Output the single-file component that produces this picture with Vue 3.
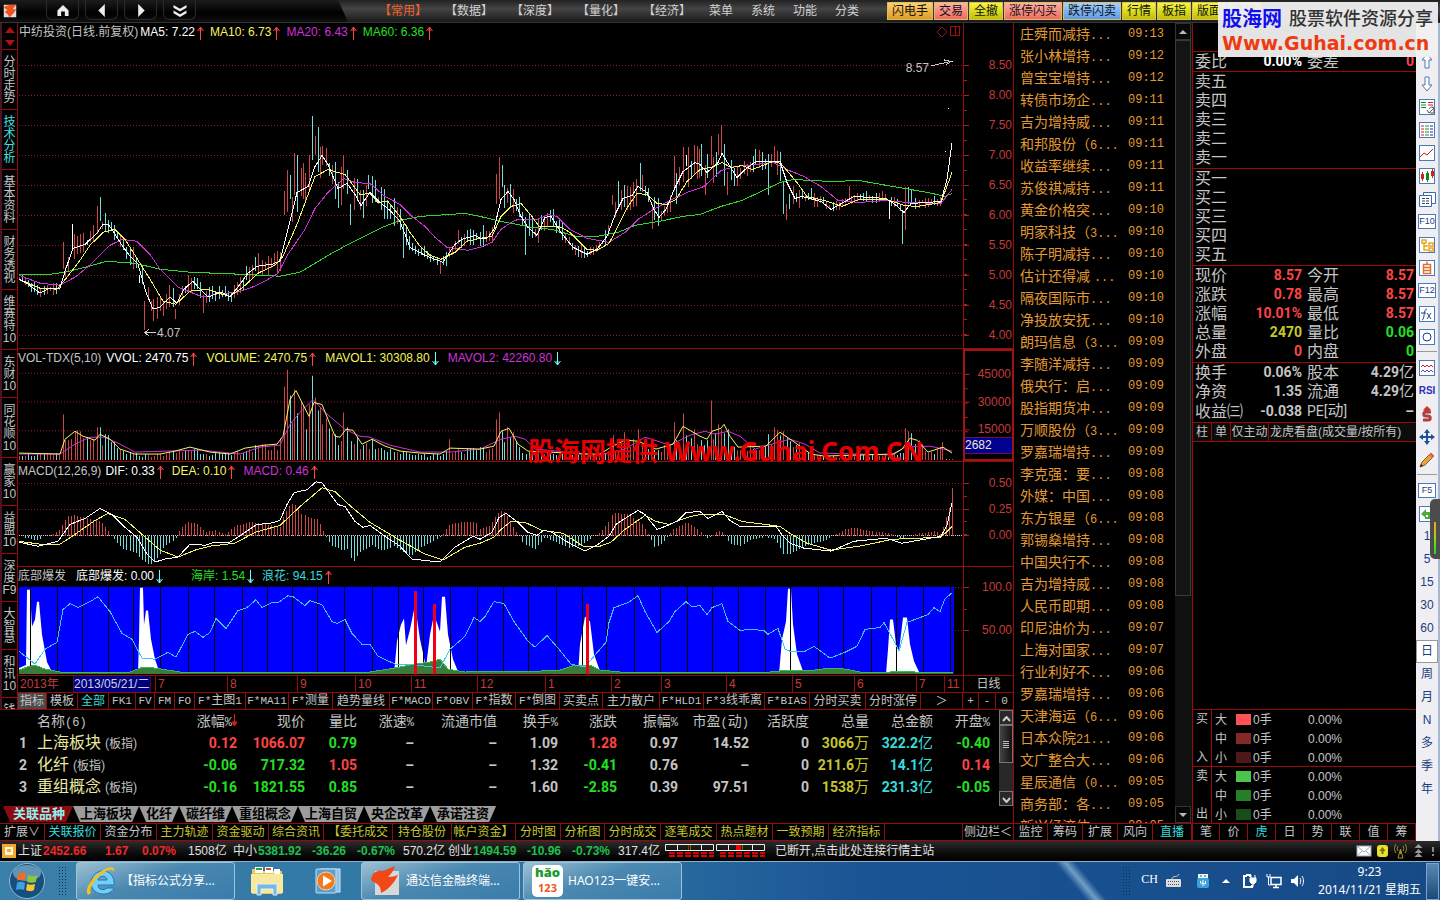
<script setup>
import { h } from 'vue'

/* Splits a label into CJK runs and half-width Latin runs. */
const Mix = (props) =>
  h('span', { class: 'mix' }, props.t.split(/([\x21-\x7e]+)/).filter(Boolean).map((s) =>
    /^[\x21-\x7e]/.test(s) ? h('span', { class: 'lat' }, s) : s))
Mix.props = ['t']

const menusA = ['【常用】', '【数据】', '【深度】', '【量化】', '【经济】']
const menusB = ['菜单', '系统', '功能', '分类']
const quick = [
  ['闪电手', 'orange'], ['交易', 'pink'], ['全撤', 'yellow'], ['涨停闪买', 'pink'], ['跌停闪卖', 'blue'],
  ['行情', 'yellow'], ['板指', 'yellow'], ['版面', 'yellow'], ['资讯', 'yellow'],
]
const sideTabs = [
  ['分', '时', '走', '势'], ['技', '术', '分', '析'], ['基', '本', '资', '料'], ['财', '务', '透', '视'],
  ['维', '赛', '特', '10'], ['东', '财', '10'], ['同', '花', '顺', '10'], ['赢', '家', '10'], ['益', '盟', '10'],
  ['深', '度', 'F9'], ['大', '智', '慧'], ['和', '讯', '10'], ['钱'],
]

const parse = (s) => s.trim().split(/\s+/).map((p) => p.split(',').map(Number))
const at = (pts, x) => {
  for (let i = 1; i < pts.length; i++) {
    if (x <= pts[i][0]) {
      const [x0, y0] = pts[i - 1]
      const [x1, y1] = pts[i]
      return y0 + ((y1 - y0) * (x - x0)) / (x1 - x0 || 1)
    }
  }
  return pts[pts.length - 1][1]
}
const noise = (i, s) => {
  const v = Math.sin(i * 12.9898 + s * 78.233) * 43758.5453
  return v - Math.floor(v)
}
const stick = (x, a, b) => `M${Math.floor(x) + 0.5} ${Math.round(a)}V${Math.round(b)}`

const ma5 = '19,280 27,284 40,294 50,289 60,289 65,272 73,249 85,245 97,234 103,225 108,225 112,230 122,246 130,257 138,265 146,293 153,310 160,308 170,298 177,304 184,290 193,282 200,290 208,298 215,295 222,293 230,298 240,285 248,274 257,267 272,265 280,262 288,230 297,193 308,187 315,167 322,156 328,165 338,189 347,184 355,195 361,206 370,193 380,203 390,211 400,222 410,248 425,256 435,260 443,263 455,245 462,240 475,236 480,239 487,239 494,230 501,200 508,192 514,200 521,217 528,228 537,236 545,218 551,217 561,233 573,248 587,255 597,250 607,237 616,213 623,199 632,196 638,187 647,193 654,210 659,218 666,210 675,188 683,172 695,163 700,165 707,173 718,163 722,154 730,167 737,178 745,170 756,162 780,162 787,183 795,199 802,197 821,202 831,210 845,202 854,197 886,199 895,205 904,213 911,204 941,202 947,180 952,143'
const ma10 = '19,280 40,289 57,290 67,278 80,261 90,246 103,233 115,230 125,240 140,264 150,280 163,302 176,305 190,292 207,290 222,295 230,297 243,288 258,274 275,266 283,257 297,225 307,198 315,177 328,170 345,175 360,195 370,194 378,203 388,202 400,217 410,233 420,247 430,256 441,260 455,253 467,242 480,239 492,237 501,217 511,207 521,204 532,217 539,227 559,227 570,233 587,250 597,251 609,244 618,227 628,207 637,194 647,195 657,204 666,205 676,200 687,182 700,170 714,167 722,163 731,168 742,166 752,170 773,162 781,164 797,183 807,197 824,201 842,207 859,200 886,200 904,206 917,207 941,203 952,173'
const ma20 = '19,276 40,284 60,286 75,278 92,264 110,246 122,240 137,242 150,255 160,270 178,288 203,298 215,295 237,293 250,289 265,282 278,274 288,255 305,230 315,209 328,193 344,179 355,183 370,184 385,197 400,205 412,217 425,227 435,238 447,248 468,251 480,248 492,243 501,230 511,223 518,220 537,220 549,215 557,217 570,230 587,239 609,243 625,233 638,220 652,211 666,203 687,193 704,187 721,171 735,167 773,163 787,170 804,177 821,187 838,201 859,203 886,201 907,203 941,204 952,190'
const ma60 = '19,275 50,275 65,273 85,268 107,262 135,264 160,270 190,273 240,275 280,277 300,273 330,255 350,244 380,229 400,221 420,217 465,214 480,217 501,222 532,228 552,230 576,237 597,237 618,233 635,226 659,222 683,217 700,215 721,207 742,201 759,193 780,183 793,180 814,181 831,182 859,181 893,187 928,193 945,197 952,194'
const range = parse('19,7 60,8 75,14 100,12 120,12 150,14 180,12 230,8 240,12 280,14 290,25 320,22 350,22 400,16 430,8 450,12 490,14 500,20 530,16 580,8 600,6 610,14 640,20 650,16 670,22 720,22 740,12 790,14 830,7 900,7 942,7')
const ma5pts = parse(ma5)
const spikes = [
  [63, 243, 270, 'r'], [72, 225, 250, 'w'], [97, 207, 235, 'r'], [100, 198, 222, 'c'], [139, 276, 284, 'w'], [144, 302, 331, 'r'],
  [153, 300, 322, 'r'], [175, 310, 320, 'r'], [203, 296, 314, 'r'], [284, 192, 216, 'r'], [287, 170, 213, 'r'], [290, 175, 200, 'c'],
  [294, 153, 196, 'r'], [297, 155, 213, 'c'], [303, 163, 200, 'r'], [309, 155, 190, 'r'], [312, 116, 160, 'c'], [315, 136, 155, 'r'],
  [318, 127, 172, 'c'], [322, 146, 165, 'r'], [343, 155, 190, 'r'], [347, 170, 195, 'c'], [350, 205, 226, 'c'], [368, 175, 190, 'c'],
  [403, 225, 259, 'c'], [440, 262, 275, 'r'], [496, 174, 205, 'r'], [499, 157, 200, 'r'], [502, 165, 188, 'c'], [525, 218, 256, 'c'],
  [612, 196, 206, 'r'], [618, 181, 208, 'c'], [640, 163, 192, 'c'], [652, 205, 230, 'r'], [674, 156, 192, 'r'], [683, 147, 182, 'r'],
  [686, 155, 166, 'w'], [699, 149, 178, 'r'], [705, 165, 196, 'r'], [711, 136, 165, 'r'], [718, 134, 155, 'r'], [721, 125, 155, 'r'],
  [724, 144, 186, 'c'], [727, 172, 196, 'r'], [755, 149, 165, 'c'], [768, 154, 196, 'c'], [774, 146, 164, 'r'], [777, 151, 175, 'r'],
  [780, 152, 181, 'c'], [783, 182, 215, 'c'], [786, 205, 221, 'r'], [789, 195, 210, 'c'], [849, 186, 200, 'r'], [889, 201, 220, 'w'],
  [902, 212, 245, 'c'], [905, 188, 231, 'r'], [908, 188, 205, 'c'], [911, 191, 204, 'c'],
]
const volSpikes = [
  [63, 415, 'r'], [75, 432, 'r'], [97, 428, 'r'], [100, 428, 'c'], [284, 387, 'r'], [287, 370, 'r'], [290, 396, 'c'], [294, 390, 'r'],
  [297, 414, 'c'], [303, 405, 'r'], [306, 430, 'c'], [309, 405, 'r'], [312, 376, 'c'], [315, 398, 'r'], [318, 411, 'c'], [322, 425, 'r'],
  [343, 413, 'r'], [347, 428, 'c'], [449, 440, 'r'], [496, 420, 'r'], [499, 413, 'r'], [502, 432, 'c'], [613, 436, 'r'], [624, 433, 'r'],
  [638, 430, 'r'], [674, 423, 'r'], [683, 414, 'r'], [686, 436, 'c'], [711, 401, 'r'], [715, 434, 'c'], [718, 425, 'r'], [721, 430, 'r'],
  [724, 434, 'c'], [768, 435, 'c'], [774, 428, 'r'], [777, 431, 'r'], [780, 436, 'c'], [905, 429, 'r'], [908, 432, 'r'], [911, 434, 'c'],
  [942, 443, 'r'],
]
const vol1 = '19,454 60,455 65,440 75,432 83,437 95,441 100,435 110,440 120,450 135,455 160,455 175,452 190,448 210,453 230,455 245,449 265,446 277,445 283,437 290,400 296,391 303,405 309,417 314,403 322,405 328,420 335,437 340,438 346,430 353,431 362,445 372,440 385,447 400,452 420,454 440,455 450,449 480,450 494,447 501,432 509,429 518,445 528,452 549,453 583,455 600,455 611,448 625,441 638,442 656,450 673,445 683,427 700,437 707,440 712,432 721,429 724,425 730,437 738,448 766,447 780,433 793,442 811,455 824,457 893,455 902,450 910,439 917,441 928,453 943,448 952,454'
const vol2 = '19,455 60,455 75,445 90,438 105,438 120,445 135,453 200,451 240,455 260,448 280,446 290,425 300,413 313,400 325,413 345,430 360,437 370,438 390,446 420,453 450,453 480,450 501,440 515,437 525,440 535,450 600,456 625,450 645,438 670,446 690,436 705,432 715,435 728,432 740,437 755,450 775,444 790,440 805,445 820,454 893,456 905,448 930,447 952,452'
const dif = '19,543 38,547 58,542 70,525 85,519 100,509 112,515 125,528 137,538 147,555 155,563 165,560 178,558 190,545 205,546 215,543 230,543 245,533 257,525 270,524 280,521 287,505 294,493 307,490 316,482 322,483 330,494 338,505 345,507 355,522 363,528 370,526 385,537 400,547 412,560 440,563 455,548 473,537 480,540 492,533 499,518 506,514 518,523 528,533 537,536 544,531 552,533 566,542 585,552 597,546 609,537 616,525 628,517 638,511 645,515 657,530 668,526 678,521 686,513 700,512 708,519 722,512 730,521 740,527 776,527 783,537 790,544 804,549 831,552 854,542 886,539 902,544 941,537 947,526 952,503'
const dea = '19,542 40,545 60,545 75,535 95,521 108,514 125,520 142,535 160,551 178,558 195,551 210,547 235,544 255,533 280,526 300,507 322,488 335,492 350,506 370,523 400,541 425,555 443,561 465,548 480,544 494,538 501,530 511,522 525,523 542,531 563,534 583,547 600,547 611,543 625,530 645,516 656,522 669,525 687,518 700,515 724,515 742,522 780,527 790,534 807,544 831,551 859,547 893,540 941,538 952,527'
const hist = parse('19,537 30,540 38,541 45,537 55,534 60,530 67,517 75,516 85,519 100,522 107,530 111,537 115,541 122,550 135,553 143,562 150,566 158,558 165,546 175,541 180,530 187,523 197,525 205,533 215,531 225,535 235,527 250,523 265,525 280,528 284,515 288,506 294,503 300,513 310,519 318,520 325,537 332,547 342,551 347,550 353,563 360,553 372,546 382,552 395,547 405,555 412,556 420,549 435,541 442,537 448,526 460,523 475,523 480,530 490,527 499,511 503,510 510,522 517,535 523,544 535,550 545,538 555,543 570,549 583,545 592,538 600,533 607,525 614,513 625,514 635,520 642,525 648,535 655,550 665,541 673,530 680,527 687,523 695,529 701,533 708,540 716,533 721,531 730,545 740,547 750,541 765,538 775,540 783,555 790,555 805,547 825,541 835,536 845,530 855,529 870,532 890,534 900,540 915,535 935,532 941,535 945,521 949,508 952,488')

const candles = { r: '', c: '', w: '' }
const vols = { r: '', c: '' }
const macd = { r: '', c: '' }
const vol1pts = parse(vol1)
for (let i = 0; i < 305; i++) {
  const x = 19 + Math.round(i * 3.07)
  const y = at(ma5pts, x)
  const a = at(range, x)
  const rising = at(ma5pts, x + 4) < at(ma5pts, x - 4)
  const color = noise(i, 3) < (rising ? 0.78 : 0.3) ? 'r' : 'c'
  if (x < 942 && !spikes.some((s) => Math.abs(s[0] - x) < 2)) {
    candles[color] += stick(x, y - a * (0.15 + 0.85 * noise(i, 1)), y + a * (0.15 + 0.75 * noise(i, 2)))
  }
  if (!volSpikes.some((s) => Math.abs(s[0] - x) < 2)) {
    const top = 461 - (461 - at(vol1pts, x)) * (0.5 + 0.65 * noise(i, 5))
    vols[color] += stick(x, x > 943 ? 460 : top, 461)
  }
  const m = at(hist, x)
  if (Math.abs(m - 537) > 1) macd[m < 537 ? 'r' : 'c'] += stick(x, m, 537)
}
spikes.forEach(([x, a, b, k]) => { candles[k] += stick(x, a, b) })
volSpikes.forEach(([x, a, k]) => { vols[k] += stick(x, a, 461) })

const wave = '19,652 35,665 45,650 57,643 63,610 70,604 78,608 90,602 98,597 110,612 122,634 132,640 142,659 155,660 168,653 176,658 188,635 195,632 203,638 210,633 216,619 226,629 238,611 247,608 256,600 262,608 272,603 278,603 288,596 293,597 305,606 310,601 322,605 332,622 337,624 345,620 352,634 362,645 370,645 378,657 395,665 410,665 440,669 450,650 465,637 474,618 480,622 485,617 494,602 504,604 514,622 528,642 535,648 547,636 559,650 571,665 585,668 594,657 606,643 609,623 614,608 628,603 638,596 645,612 657,633 669,622 675,612 686,602 692,607 700,606 707,615 712,608 722,604 728,622 740,631 750,630 764,631 768,635 778,629 785,650 790,652 805,652 814,647 830,659 845,653 857,647 865,630 880,628 884,623 893,640 899,652 907,623 928,615 934,608 940,612 945,599 952,593'
const shore = '19,671 27,668 35,666 45,670 60,673 130,673 143,668 155,669 180,673 370,673 395,669 415,665 430,663 440,660 448,670 465,673 540,672 560,671 575,666 590,666 600,671 620,673 770,673 790,671 815,671 831,669 845,670 860,673 890,673 903,672 915,673 953,673'
const peaks = [
  '19,675 19,669 26,666 27,590 30,590 32,627 35,620 37,602 39,602 42,635 47,663 53,675',
  '138,675 139,640 140,588 143,588 144,625 146,611 148,611 151,640 155,660 160,675',
  '394,675 397,642 401,625 404,619 406,646 410,630 415,605 420,640 426,668 430,635 434,615 440,632 442,597 445,597 448,635 453,660 459,675',
  '578,675 580,645 585,617 590,622 594,655 601,675',
  '779,675 782,640 786,622 788,589 791,589 793,625 797,655 804,675',
  '886,675 888,650 890,620 893,620 896,645 899,652 903,618 907,618 910,645 914,662 920,675',
]
const bars = [31, 58, 83, 109, 134, 161, 189, 215, 243, 268, 293, 318, 345, 373, 399, 424, 451, 478, 504, 529, 557, 583, 607, 635, 661, 688, 713, 739, 766, 791, 819, 844, 872, 897, 924, 951]

const minor = (from, to, step) => {
  let d = ''
  for (let y = from; y <= to; y += step) d += `M0 ${Math.round(y) + 0.5}H3`
  return d
}
const panels = [
  { id: 'price', y: 23, h: 326, grid: [65, 95, 125, 155, 185, 216, 246, 276, 306, 336], labels: ['8.50', '8.00', '7.50', '7.00', '6.50', '6.00', '5.50', '5.00', '4.50', '4.00'], minor: minor(65, 340, 15) },
  { id: 'vol', y: 349, h: 113, grid: [373, 402, 431], labels: ['45000', '30000', '15000'], minor: minor(373, 440, 15) },
  { id: 'macd', y: 462, h: 105, grid: [483, 509, 536], labels: ['0.50', '0.25', '0.00'], minor: minor(483, 540, 13) },
  { id: 'wave', y: 567, h: 109, grid: [587, 631], labels: ['100.0', '50.00'], minor: minor(587, 632, 22) },
]
const legends = {
  price: [['中纺投资(日线.前复权)', 'g', ''], ['MA5: 7.22', 'w', 'u'], ['MA10: 6.73', 'y', 'u'], ['MA20: 6.43', 'm', 'u'], ['MA60: 6.36', 'n', 'u']],
  vol: [['VOL-TDX(5,10)', 'g', ''], ['VVOL: 2470.75', 'w', 'u'], ['VOLUME: 2470.75', 'y', 'u'], ['MAVOL1: 30308.80', 'y', 'd'], ['MAVOL2: 42260.80', 'm', 'd']],
  macd: [['MACD(12,26,9)', 'g', ''], ['DIF: 0.33', 'w', 'u'], ['DEA: 0.10', 'y', 'u'], ['MACD: 0.46', 'm', 'u']],
  wave: [['底部爆发', 'g', ''], ['底部爆发: 0.00', 'w', 'd'], ['海岸: 1.54', 'n', 'd'], ['浪花: 94.15', 'c', 'u']],
}
const months = [[155, '7'], [227, '8'], [297, '9'], [355, '10'], [411, '11'], [477, '12'], [545, '1'], [611, '2'], [661, '3'], [726, '4'], [792, '5'], [854, '6'], [916, '7'], [944, '11']]
const pct = (v, from, size) => ((v - from) / size) * 100 + '%'

const formulaTabs = ['指标', '模板', '全部', 'FK1', 'FV', 'FM', 'FO', 'F*主图1', 'F*MA11', 'F*测量', '趋势量线', 'F*MACD', 'F*OBV', 'F*指数', 'F*倒图', '买卖点', '主力散户', 'F*HLD1', 'F*3线乖离', 'F*BIAS', '分时买卖', '分时涨停', '＞', '+', '-', '0']
const heads = ['', '名称(6)', '涨幅%', '现价', '量比', '涨速%', '流通市值', '换手%', '涨跌', '振幅%', '市盈(动)', '活跃度', '总量', '总金额', '开盘%']
const rows = [
  ['上海板块', [['0.12', 'r'], ['1066.07', 'r'], ['0.79', 'n'], ['–', 'g'], ['–', 'g'], ['1.09', 'g'], ['1.28', 'r'], ['0.97', 'g'], ['14.52', 'g'], ['0', 'g'], ['3066', 'o', '万'], ['322.2', 'b', '亿'], ['-0.40', 'n']]],
  ['化纤', [['-0.06', 'n'], ['717.32', 'n'], ['1.05', 'r'], ['–', 'g'], ['–', 'g'], ['1.32', 'g'], ['-0.41', 'n'], ['0.76', 'g'], ['–', 'g'], ['0', 'g'], ['211.6', 'o', '万'], ['14.1', 'b', '亿'], ['0.14', 'r']]],
  ['重组概念', [['-0.16', 'n'], ['1821.55', 'n'], ['0.85', 'n'], ['–', 'g'], ['–', 'g'], ['1.60', 'g'], ['-2.85', 'n'], ['0.39', 'g'], ['97.51', 'g'], ['0', 'g'], ['1538', 'o', '万'], ['231.3', 'b', '亿'], ['-0.05', 'n']]],
]
const sectors = ['关联品种', '上海板块', '化纤', '碳纤维', '重组概念', '上海自贸', '央企改革', '承诺注资']
const footTabs = [['扩展∨', 'g'], ['关联报价', 'c'], ['资金分布', 'g'], ['主力轨迹', 'o'], ['资金驱动', 'o'], ['综合资讯', 'o'], ['【委托成交', 'o'], ['持仓股份', 'o'], ['帐户资金】', 'o'], ['分时图', 'o'], ['分析图', 'o'], ['分时成交', 'o'], ['逐笔成交', 'o'], ['热点题材', 'o'], ['一致预期', 'o'], ['经济指标', 'o'], ['', 'g'], ['侧边栏＜', 'g']]
const newsTabs = ['监控', '筹码', '扩展', '风向', '直播']
const quoteTabs = ['笔', '价', '虎', '日', '势', '联', '值', '筹']
const news = [
  ['庄舜而减持...', '13'], ['张小林增持...', '12'], ['曾宝宝增持...', '12'], ['转债市场企...', '11'], ['吉为增持威...', '11'], ['和邦股份（6...', '11'], ['收益率继续...', '11'], ['苏俊祺减持...', '11'],
  ['黄金价格突...', '10'], ['明家科技（3...', '10'], ['陈子明减持...', '10'], ['估计还得减 ...', '10'], ['隔夜国际市...', '10'], ['净投放安抚...', '10'], ['朗玛信息（3...', '09'], ['李随洋减持...', '09'],
  ['俄央行：启...', '09'], ['股指期货冲...', '09'], ['万顺股份（3...', '09'], ['罗嘉瑞增持...', '09'], ['李克强：要...', '08'], ['外媒：中国...', '08'], ['东方银星（6...', '08'], ['郭锡燊增持...', '08'],
  ['中国央行不...', '08'], ['吉为增持威...', '08'], ['人民币即期...', '08'], ['印尼油价为...', '07'], ['上海对国家...', '07'], ['行业利好不...', '06'], ['罗嘉瑞增持...', '06'], ['天津海运（6...', '06'],
  ['日本众院21...', '06'], ['文广整合大...', '06'], ['星辰通信（0...', '05'], ['商务部：各...', '05'], ['新兴经济体...', '05'],
]
const quoteA = [
  ['现价', '8.57', 'r', '今开', '8.57', 'r'], ['涨跌', '0.78', 'r', '最高', '8.57', 'r'], ['涨幅', '10.01%', 'r', '最低', '8.57', 'r'],
  ['总量', '2470', 'o', '量比', '0.06', 'n'], ['外盘', '0', 'r', '内盘', '0', 'n'],
]
const quoteB = [['换手', '0.06%', 'g', '股本', '4.29', 'g', '亿'], ['净资', '1.35', 'g', '流通', '4.29', 'g', '亿'], ['收益㈢', '-0.038', 'g', 'PE[动]', '–', 'g', '']]
const flows = [
  { side: ['买', '入'], items: [['大', 'r1'], ['中', 'r2'], ['小', 'r3']] },
  { side: ['卖', '出'], items: [['大', 'g1'], ['中', 'g2'], ['小', 'g3']] },
]
const tools = ['up', 'down', 'report', 'list', 'line', 'kline', 'pages', 'F10', 'tree', 'self', 'F12', 'fx', 'circle', '-', 'waves', 'RSI', 'dollar', 'move', 'pencil', '-', 'F5', 'back', '1', '5', '15', '30', '60', '日', '周', '月', 'N', '多', '季', '年']
const plain = (t) => /^(\d+|RSI|[日周月N多季年])$/.test(t)
const indices = [
  ['上证', '2452.66', '1.67', '0.07%', '1508亿', 'up'],
  ['中小', '5381.92', '-36.26', '-0.67%', '570.2亿', 'dn'],
  ['创业', '1494.59', '-10.96', '-0.73%', '317.4亿', 'dn'],
]
</script>

<template>
  <div class="screen">
    <header class="top">
      <svg class="logo" viewBox="0 0 18 18"><rect x="2" y="2" width="14" height="14" fill="#ddd" /><path d="M2 5c4-3 8-3 14-3l-4 5h4c-3 5-5 7-8 9-1-3-2-4-5-6l3-2z" fill="#f2501c" /></svg>
      <nav class="nav">
        <button aria-label="主页"><svg viewBox="0 0 14 14"><path d="M7 1L1 7v6h4V8h4v5h4V7z" /></svg></button>
        <button aria-label="后退"><svg viewBox="0 0 14 14"><path d="M10 0v14L3 7z" /></svg></button>
        <button aria-label="前进"><svg viewBox="0 0 14 14"><path d="M4 0v14l7-7z" /></svg></button>
        <button aria-label="更多"><svg viewBox="0 0 14 14"><path d="M0 1l7 4 7-4v3L7 8 0 4zM0 7l7 4 7-4v3l-7 4-7-4z" /></svg></button>
      </nav>
      <nav class="menus">
        <a v-for="(m, i) in menusA" :key="m" href="#" class="wide" :class="{ on: i === 0 }">{{ m }}</a>
        <a v-for="m in menusB" :key="m" href="#">{{ m }}</a>
      </nav>
      <div class="quick">
        <button v-for="q in quick" :key="q[0]" :class="q[1]">{{ q[0] }}</button>
      </div>
      <div class="brand">
        <div class="brand-row"><b>股海网</b><span>股票软件资源分享</span></div>
        <div class="brand-url">Www.Guhai.com.cn</div>
      </div>
    </header>

    <main class="main">
      <section class="left">
        <div class="upper">
          <div class="side">
            <div class="side-arrows">
              <button aria-label="上一只"><svg viewBox="0 0 10 6"><path d="M5 0l5 6H0z" /></svg></button>
              <button aria-label="下一只"><svg viewBox="0 0 10 6"><path d="M5 6l5-6H0z" /></svg></button>
            </div>
            <button v-for="(t, i) in sideTabs" :key="i" class="side-tab" :class="{ on: i === 1 }">
              <span v-for="(c, j) in t" :key="j">{{ c }}</span>
            </button>
          </div>

          <div class="charts">
            <section v-for="p in panels" :key="p.id" class="panel" :class="p.id">
              <div class="plot">
                <svg class="canvas" :viewBox="`18 ${p.y} 945 ${p.h}`" preserveAspectRatio="none">
                  <path v-for="g in p.grid" :key="g" class="grid" :d="`M19 ${g + 0.5}H963`" />
                  <template v-if="p.id === 'price'">
                    <path class="red" :d="candles.r" /><path class="cyan" :d="candles.c" /><path class="white" :d="candles.w" />
                    <polyline class="green" :points="ma60" /><polyline class="magenta" :points="ma20" /><polyline class="yellow" :points="ma10" /><polyline class="white" :points="ma5" />
                    <path class="white" d="M945 151.5h1M948 108.5h1M952 61.5h1" />
                    <path class="gray" d="M931 66L951 61.500M944 60L951 61.500L946 65M144.500 333.500H156M149 330L145 333.500L149 337" />
                    <path class="mark" d="M942 27l5 5-5 5-5-5zM950.500 26.500h9v9h-9zM955.500 26v10" />
                  </template>
                  <template v-else-if="p.id === 'vol'">
                    <path class="red" :d="vols.r" /><path class="cyan" :d="vols.c" />
                    <polyline class="magenta" :points="vol2" /><polyline class="yellow" :points="vol1" />
                  </template>
                  <template v-else-if="p.id === 'macd'">
                    <path class="zero" d="M19 536.500H963" />
                    <path class="red" :d="macd.r" /><path class="cyan" :d="macd.c" />
                    <polyline class="yellow" :points="dea" /><polyline class="white" :points="dif" />
                  </template>
                  <template v-else>
                    <rect x="19" y="587" width="935" height="88" fill="#0000fe" />
                    <polygon v-for="k in peaks" :key="k" :points="k" fill="#fff" />
                    <path v-for="b in bars" :key="b" class="black" :d="`M${b - 0.5} 587V675`" />
                    <polygon :points="`19,675 ${shore} 953,675`" fill="#3a7a3a" />
                    <polyline class="lime" :points="shore" />
                    <polyline class="aqua" :points="wave" />
                    <path d="M414 591h3v84h-3zM433 604h3v71h-3zM586 604h3v71h-3z" fill="#f00010" />
                  </template>
                </svg>
                <div class="legend">
                  <span v-for="(l, i) in legends[p.id]" :key="i" class="leg" :class="'t-' + l[1]">{{ l[0] }}<svg v-if="l[2]" :class="l[2]" viewBox="0 0 7 14"><path d="M3.500 14V1M0.500 5L3.500 1L6.500 5M2 4h3" /></svg></span>
                </div>
                <template v-if="p.id === 'price'">
                  <span class="tag hi">8.57</span>
                  <span class="tag lo">4.07</span>
                </template>
              </div>
              <div class="axis">
                <svg class="canvas" :viewBox="`0 ${p.y} 51 ${p.h}`" preserveAspectRatio="none">
                  <path class="tick" :d="p.minor" />
                  <path v-for="g in p.grid" :key="g" class="tick" :d="`M0 ${g + 0.5}H5`" />
                </svg>
                <span v-for="(g, i) in p.grid" :key="g" class="scale" :style="{ top: pct(g, p.y, p.h) }">{{ p.labels[i] }}</span>
                <span v-if="p.id === 'vol'" class="cursor">2682</span>
              </div>
            </section>
            <div class="dates">
              <div class="date-line">
                <span class="year">2013年</span>
                <span class="pick">2013/05/21/二</span>
                <span v-for="(m, i) in months" :key="i" class="month" :style="{ left: pct(m[0], 18, 945) }">{{ m[1] }}</span>
              </div>
              <div class="period">日线</div>
            </div>
            <nav class="formula">
              <button v-for="(f, i) in formulaTabs" :key="f" :class="{ sel: i === 0, on: i === 2 }"><Mix :t="f" /></button>
            </nav>
          </div>
        </div>

        <div class="board">
          <table>
            <colgroup><col v-for="(c, i) in heads" :key="i" :class="'c' + i"></colgroup>
            <thead>
              <tr><th v-for="(c, i) in heads" :key="i"><Mix :t="c" /><svg v-if="i === 2" viewBox="0 0 5 12"><path d="M2.500 0V10M0 8h5L2.500 12z" /></svg></th></tr>
            </thead>
            <tbody>
              <tr v-for="(r, i) in rows" :key="r[0]">
                <td class="t-g">{{ i + 1 }}</td>
                <td class="name">{{ r[0] }} <small>(板指)</small></td>
                <td v-for="(v, j) in r[1]" :key="j" :class="'t-' + v[1]">{{ v[0] }}<i v-if="v[2]">{{ v[2] }}</i></td>
              </tr>
            </tbody>
          </table>
          <div class="vbar">
            <button aria-label="向上"><svg viewBox="0 0 9 6"><path d="M1 5l3.500-4L8 5" /></svg></button>
            <div class="thumb"></div>
            <button aria-label="向下"><svg viewBox="0 0 9 6"><path d="M1 1l3.500 4L8 1" /></svg></button>
          </div>
        </div>
        <nav class="sectors"><button v-for="(s, i) in sectors" :key="s" :class="{ on: i === 0 }">{{ s }}</button></nav>
        <nav class="foot"><button v-for="(f, i) in footTabs" :key="i" :class="'t-' + f[1]">{{ f[0] }}</button></nav>
      </section>

      <section class="news">
        <div class="news-body">
          <ul>
            <li v-for="(n, i) in news" :key="i"><a href="#"><Mix :t="n[0]" /></a><time>09:{{ n[1] }}</time></li>
          </ul>
          <div class="news-bar">
            <button aria-label="上翻"><svg viewBox="0 0 8 4"><path d="M4 0l4 4H0z" /></svg></button>
            <div class="news-thumb"></div>
            <button aria-label="下翻"><svg viewBox="0 0 8 4"><path d="M4 4l4-4H0z" /></svg></button>
          </div>
        </div>
        <nav class="tabs news-tabs"><button v-for="t in newsTabs" :key="t" :class="{ on: t === '直播' }">{{ t }}</button></nav>
      </section>

      <section class="quote">
        <div class="q-head"></div>
        <div class="q-block one"><div class="q-row"><span>委比</span><b class="t-w">0.00%</b><span>委差</span><b class="t-r">0</b></div></div>
        <div class="q-block"><div v-for="n in '五四三二一'" :key="n" class="q-row"><span>卖{{ n }}</span></div></div>
        <div class="q-block"><div v-for="n in '一二三四五'" :key="n" class="q-row"><span>买{{ n }}</span></div></div>
        <div class="q-block"><div v-for="q in quoteA" :key="q[0]" class="q-row"><span>{{ q[0] }}</span><b :class="'t-' + q[2]">{{ q[1] }}</b><span>{{ q[3] }}</span><b :class="'t-' + q[5]">{{ q[4] }}</b></div></div>
        <div class="q-block last"><div v-for="q in quoteB" :key="q[0]" class="q-row"><span>{{ q[0] }}</span><b :class="'t-' + q[2]">{{ q[1] }}</b><span><Mix :t="q[3]" /></span><b :class="'t-' + q[5]">{{ q[4] }}<i>{{ q[6] }}</i></b></div></div>
        <nav class="watch"><button>柱</button><button>单</button><button>仅主动</button><button>龙虎看盘(成交量/按所有)</button></nav>
        <div class="q-space"></div>
        <div v-for="f in flows" :key="f.side[0]" class="flow">
          <div class="flow-side"><span>{{ f.side[0] }}</span><span>{{ f.side[1] }}</span></div>
          <div class="flow-rows">
            <div v-for="it in f.items" :key="it[0]" class="flow-row"><span>{{ it[0] }}</span><i :class="it[1]"></i><span>0手</span><span>0.00%</span></div>
          </div>
        </div>
        <nav class="tabs quote-tabs"><button v-for="t in quoteTabs" :key="t" :class="{ on: t === '虎' }">{{ t }}</button></nav>
      </section>

      <aside class="strip">
        <template v-for="(t, i) in tools" :key="i">
          <hr v-if="t === '-'">
          <button v-else :class="{ day: t === '日', rsi: t === 'RSI' }" :aria-label="t">
            <template v-if="plain(t)">{{ t }}</template>
            <span v-else-if="t[0] === 'F'" class="key">{{ t }}</span>
            <svg v-else viewBox="0 0 18 18">
              <path v-if="t === 'up'" d="M9 2l5 6h-3v8H7V8H4z" fill="#fff" stroke="#4a78b8" />
              <path v-else-if="t === 'down'" d="M9 16l5-6h-3V2H7v8H4z" fill="#fff" stroke="#4a78b8" />
              <g v-else-if="t === 'dollar'"><path d="M9 1l4 4-2 1H7L5 5z" fill="#c33" /><path d="M13 7H8c-3 0-3 4 0 4h2c3 0 3 4 0 4H5" fill="none" stroke="#b04040" stroke-width="3" /></g>
              <g v-else-if="t === 'move'" fill="#1c4f9c"><path d="M9 1l3 4H6zM9 17l3-4H6zM1 9l4-3v6zM17 9l-4-3v6z" /><path d="M8 4h2v10H8zM4 8h10v2H4z" /></g>
              <g v-else-if="t === 'pencil'"><path d="M2 16l2-5 9-9 3 3-9 9z" fill="#e8a23a" stroke="#8a5a20" /><path d="M11 4l3 3 2-2-3-3z" fill="#e86a5a" /><path d="M2 16l1-3 2 2z" fill="#222" /></g>
              <g v-else-if="t === 'pages'"><path d="M5.500 2.500h12v11h-12z" fill="#fff" stroke="#3a68a8" /><path d="M1.500 5.500h12v11h-12z" fill="#fff" stroke="#3a68a8" /><path d="M4 8.500h3M8 8.500h3M4 11h3M8 11h3M4 13.500h3M8 13.500h3" stroke="#345" /></g>
              <g v-else>
                <rect x="1.500" y="1.500" width="15" height="15" fill="#fff" stroke="#4a7ab8" />
                <path v-if="t === 'report'" d="M3 4.500h5M3 7h5M3 9.500h5" stroke="#1a8a2a" fill="none" />
                <path v-if="t === 'report'" d="M10 4.500h5M10 7h5" stroke="#c22" fill="none" /><path v-if="t === 'report'" d="M9 12l2 3 5-5-2-1M11 11c2-3 4-2 5 0v4h-4" stroke="#555" fill="none" />
                <path v-if="t === 'list'" d="M3 5h3M3 8h3M3 11h3M3 14h3" stroke="#c22" /><path v-if="t === 'list'" d="M7 5h4M7 8h4M7 11h4M7 14h4" stroke="#282" /><path v-if="t === 'list'" d="M12 5h3M12 8h3M12 11h3M12 14h3" stroke="#22a" />
                <path v-if="t === 'line'" d="M2 13l4-4 3 2 6-6" fill="none" stroke="#c22" />
                <path v-if="t === 'kline'" d="M4.500 5v9M14.500 2v9" stroke="#c22" /><path v-if="t === 'kline'" d="M4.500 7v5M14.500 4v5" stroke="#c22" stroke-width="3" /><path v-if="t === 'kline'" d="M9.500 4v11" stroke="#181" /><path v-if="t === 'kline'" d="M9.500 6v7" stroke="#181" stroke-width="3" />
                <path v-if="t === 'tree'" d="M4 4h4v3H4zM6 7v7h4M6 10h4M11 7h4v3h-4zM11 12h4v3h-4z" fill="none" stroke="#e8a820" stroke-width="1.500" />
                <path v-if="t === 'self'" d="M5.500 5.500h7v9h-7zM5 8.500h8M5 11.500h8M9 2.500v3" fill="none" stroke="#e07030" stroke-width="1.500" />
                <path v-if="t === 'fx'" d="M4 15c3 0 1-11 5-11M3 8h5M9 8l4 6M13 8l-4 6" fill="none" stroke="#1c3f9c" />
                <circle v-if="t === 'circle'" cx="9" cy="9" r="4" fill="none" stroke="#1c3f9c" />
                <path v-if="t === 'waves'" d="M3 8l2-2 2 2 2-2 2 2 2-2 2 2" fill="none" stroke="#c22" /><path v-if="t === 'waves'" d="M3 13l2-2 2 2 2-2 2 2 2-2 2 2" fill="none" stroke="#63c" />
                <path v-if="t === 'back'" d="M3 9l5-5v3h5v7H7v-2h3v-2H8v3z" fill="#4aaa3a" />
              </g>
            </svg>
          </button>
        </template>
        <div class="knob"><i></i></div>
      </aside>
    </main>

    <footer class="status">
      <svg class="st-ico" viewBox="0 0 14 14"><rect width="14" height="14" fill="#f0a830" /><rect x="3" y="3" width="8" height="8" fill="#fff6d8" /><rect x="5" y="5" width="4" height="3" fill="#e8b040" /></svg>
      <div v-for="x in indices" :key="x[0]" class="idx" :class="x[5]"><span>{{ x[0] }}</span><b>{{ x[1] }}</b><b>{{ x[2] }}</b><b>{{ x[3] }}</b><span>{{ x[4] }}</span></div>
      <svg class="gauge" viewBox="0 0 102 14">
        <path d="M0.500 0.500h48v6h-48zM12.500 1v6M36.500 1v6M51.500 0.500h48v6h-48zM63.500 1v6M87.500 1v6" fill="none" stroke="#eee" />
        <path d="M23 1h1v5h-1zM71 1h5v5h-5z" fill="#f00" /><path d="M25 1h1v5h-1zM77 1h1v5h-1z" fill="#0a0" />
        <path d="M4 9H49M4 12H49M55 9H100M55 12H100" stroke="#e00000" stroke-width="2" stroke-dasharray="6 2" />
      </svg>
      <span class="link-msg">已断开,点击此处连接行情主站</span>
      <svg class="st-right" viewBox="0 0 80 16">
        <rect x="1" y="3" width="14" height="10" fill="#fff" stroke="#9ab" /><path d="M1 3l7 6 7-6M1 13l5-5M15 13l-5-5" fill="none" stroke="#9ab" />
        <rect x="21" y="2" width="11" height="12" rx="3" fill="#e6e030" /><path d="M26.500 4l3 4h-2v3h-2V8h-2z" fill="#7a7000" />
        <path d="M44.500 6v5M42 15l2.500-9 2.500 9zM42 3c-1 2-1 3 0 5M47 3c1 2 1 3 0 5M40 1c-2 3-2 6 0 9M49 1c2 3 2 6 0 9" fill="none" stroke="#a09038" />
        <path d="M62.500 1l4 4h-8zM62.500 6l4 4h-8zM62.500 10l4 4h-8z" fill="#999" /><path d="M76 4h2v5h-2zM76 11h2v2h-2z" fill="#888" />
      </svg>
    </footer>

    <footer class="taskbar">
      <button class="orb" aria-label="开始"><svg viewBox="0 0 38 38">
        <circle cx="19" cy="19" r="17.500" fill="#174f7c" stroke="#8fb8d0" /><ellipse cx="19" cy="11" rx="14" ry="8" fill="#7fb2cc" opacity="0.7" />
        <path d="M10 12c3-2 5-1 8 0l-1 7c-3-1-5-2-8 0z" fill="#f06a28" /><path d="M20 13c3 1 5 2 9 0l-1 7c-3 1-6 1-9 0z" fill="#8cc63e" />
        <path d="M9 21c3-2 5-1 8 0l-1 7c-3-1-6-1-8 0z" fill="#3f9fe0" /><path d="M19 22c3 1 5 1 8 0l-1 6c-3 2-6 1-8 0z" fill="#fbc52c" />
      </svg></button>
      <span class="grip"></span>
      <button class="task ie"><svg viewBox="0 0 32 32"><path fill-rule="evenodd" d="M29 20c1-8-4-14-11-14S6 12 6 18s5 11 12 11c5 0 9-2 11-6h-7c-3 3-9 2-9-3zM13 15c1-5 9-5 9 0z" fill="#6fd0f8" stroke="#2077b8" /><path d="M3 30C-2 24 10 8 22 3c6-2 8 0 7 4-1-3-4-3-9 0C11 12 3 24 6 28z" fill="#f4c020" /></svg><span>【指标公式分享...</span></button>
      <button class="pin" aria-label="资源管理器"><svg viewBox="0 0 34 32"><path d="M2 4h9l2 2h19v23H2z" fill="#e8c860" /><path d="M5 2h8v6H5zM15 2h8v6h-8zM24 4h6v5h-6z" fill="#fff" /><path d="M6 3h6v2H6z" fill="#3a9a4a" /><path d="M16 3h5v2h-5z" fill="#d05030" /><path d="M1 9h32v19H1z" fill="#f8e9a0" /><path d="M7 30V19h20v11h-4v-6H11v6z" fill="#78b8e0" stroke="#d8f0ff" /></svg></button>
      <button class="pin small" aria-label="播放器"><svg viewBox="0 0 28 28"><rect x="7" y="2" width="19" height="23" fill="#8cc0e0" stroke="#cfe8f8" /><rect x="2" y="2" width="20" height="24" rx="1" fill="#5aa0d0" stroke="#bfe0f4" /><circle cx="12" cy="14" r="9" fill="#f07a1c" stroke="#ffd0a0" /><path d="M9 8.500l9 5.500-9 5.500z" fill="#fff" /></svg></button>
      <button class="task app"><svg viewBox="0 0 32 32"><rect x="6" y="6" width="24" height="24" fill="#d8d8d8" /><path d="M2 15c1-7 6-10 12-9l12-5c-1 4-4 8-7 11 4 0 7-1 10-2-4 8-9 14-17 18 0-5-2-8-4-9-2-2-5-2-6-4z" fill="#f04818" /></svg><span>通达信金融终端...</span></button>
      <button class="task hao"><span class="hao-ico"><b>hǎo</b><i>123</i></span><span>HAO123一键安...</span></button>
      <div class="beam"></div>
      <div class="tray">
        <span class="grip"></span>
        <span class="ch">CH</span>
        <svg class="w16" viewBox="0 0 16 16"><rect x="0" y="6" width="15" height="8" rx="1" fill="#ddd" /><path d="M2 8.500h11M2 11.500h11" stroke="#555" stroke-dasharray="1 1" /><path d="M6 6c0-4 6-1 7-5" fill="none" stroke="#ccc" /></svg>
        <svg class="usb" viewBox="0 0 14 16"><rect x="2" y="1" width="10" height="5" fill="#e8f4fa" /><path d="M4 3h2M8 3h2" stroke="#357" /><rect x="1" y="5" width="12" height="10" rx="2" fill="#3aa0e0" /><path d="M7 7v6M4.500 8v2l5 1V8" stroke="#fff" fill="none" /></svg>
        <svg class="caret" viewBox="0 0 8 4"><path d="M4 0l4 4H0z" fill="#fff" /></svg>
        <svg class="w16" viewBox="0 0 16 16"><path d="M5 3H2v11h8v-2M4 2h4v2" fill="none" stroke="#fff" stroke-width="2" /><path d="M8 5h6v4l-2 2h-2L8 9zM9 2v3M13 2v3M11 11v3" fill="#fff" stroke="#fff" /></svg>
        <svg class="w16" viewBox="0 0 16 16"><path d="M5 4.500h10v7H5zM10 12v2M7 14.500h6" fill="none" stroke="#fff" stroke-width="1.500" /><path d="M1 1v3h3V1M2.500 4v8h2" fill="none" stroke="#fff" /></svg>
        <svg class="w16" viewBox="0 0 16 16"><path d="M1 6h3l4-4v12l-4-4H1z" fill="#fff" /><path d="M10 5c1 2 1 4 0 6M12 3c2 3 2 7 0 10" fill="none" stroke="#fff" /></svg>
        <div class="clock"><span>9:23</span><span>2014/11/21 星期五</span></div>
        <button class="desk" aria-label="显示桌面"></button>
      </div>
    </footer>

    <div class="mark-center">股海网提供 <span>Www.Guhai.Com.CN</span></div>
  </div>
</template>

<style>
body { margin: 0; background: #000; }
</style>

<style scoped>
* { box-sizing: border-box; }
button { border: 0; padding: 0; margin: 0; background: none; color: inherit; font: inherit; white-space: nowrap; }
a { color: inherit; text-decoration: none; }
.screen {
  --line: #960a0a;
  position: relative;
  display: grid;
  grid-template-rows: 23px minmax(0, 1fr) 20px 39px;
  height: 100vh;
  min-height: 860px;
  min-width: 1200px;
  overflow: hidden;
  background: #000;
  color: #c4c4c4;
  font: 12px/14px "Liberation Sans", "Noto Sans CJK SC", sans-serif;
}
:deep(.lat) { font-family: "Liberation Mono", monospace; font-size: 12px; }
.t-g { color: #c4c4c4; }
.t-w { color: #fff; }
.t-y { color: #f4f45c; }
.t-m { color: #d030d8; }
.t-n { color: #22e022; }
.t-c, .t-b { color: #36dcdc; }
.t-r { color: #ff4444; }
.t-o { color: #c6c62c; }

/* top bar */
.top { position: relative; display: flex; align-items: center; background: linear-gradient(#1c1c1c, #000 60%, #101010); border-bottom: 1px solid #333; }
.logo { width: 16px; height: 18px; margin-left: 2px; }
.nav { display: flex; gap: 6px; margin-left: 28px; height: 20px; align-self: flex-start; }
.nav button { width: 33px; border: 1px solid #2a2a2a; border-top: 0; border-radius: 0 0 6px 6px; }
.nav svg { width: 14px; height: 13px; fill: #eee; vertical-align: middle; }
.menus { display: flex; flex: 1; align-self: stretch; margin-left: 142px; padding-left: 32px; background: linear-gradient(#222, #444 40%, #1a1a1a); clip-path: polygon(0 0, 100% 0, 100% 100%, 10px 100%); line-height: 22px; color: #d0d0d0; }
.menus a { width: 42px; text-align: center; white-space: nowrap; }
.menus .wide { width: 66px; }
.menus .on { color: #f2622c; }
.quick { position: absolute; left: 887px; top: 2px; display: flex; gap: 1px; height: 18px; color: #111; }
.quick button { padding: 0 4px; border: 1px solid #d8c060; }
.orange { background: linear-gradient(#ffd070, #e09a20); }
.pink { background: linear-gradient(#ffb0a8, #f06a60); }
.quick .yellow { background: linear-gradient(#f6f640, #c0c000); }
.blue { background: linear-gradient(#a8d0ff, #5a9ae8); }
.brand { position: absolute; z-index: 5; right: 2px; top: 2px; width: 220px; height: 55px; padding: 4px 0 0 4px; background: rgba(240, 240, 240, 0.95); }
.brand-row { display: flex; align-items: center; gap: 7px; line-height: 26px; }
.brand-row b { font-size: 20px; color: #1010ee; white-space: nowrap; }
.brand-row span { font-size: 18px; font-weight: 500; color: #333; white-space: nowrap; }
.brand-url { font: bold 19px/22px "DejaVu Sans", sans-serif; color: #ee3a10; }

/* main columns */
.main { display: grid; grid-template-columns: minmax(0, 1fr) 178px 224px 24px; min-height: 0; }
.left { display: grid; grid-template-rows: minmax(0, 1fr) 97px 17px 18px; min-width: 0; min-height: 0; }
.upper { display: grid; grid-template-columns: 18px minmax(0, 1fr); min-height: 0; }
.side { display: flex; flex-direction: column; overflow: hidden; border-right: 1px solid var(--line); border-left: 2px solid #4a1420; }
.side-arrows { display: flex; flex: none; flex-direction: column; justify-content: space-around; align-items: center; height: 26px; }
.side-arrows svg { width: 10px; height: 6px; fill: #b01010; display: block; }
.side-tab { display: flex; flex: none; flex-direction: column; align-items: center; padding: 6px 0 5px; line-height: 12px; border-top: 1px solid var(--line); }
.side-tab.on { color: #40e0e0; }

.charts { display: grid; grid-template-rows: minmax(0, 326fr) minmax(0, 113fr) minmax(0, 105fr) minmax(0, 109fr) 16px 17px; min-width: 0; }
.panel { display: grid; grid-template-columns: minmax(0, 1fr) 51px; border-bottom: 1px solid var(--line); }
.plot, .axis { position: relative; }
.axis { border-left: 1px solid var(--line); border-right: 1px solid var(--line); color: #c23c3c; }
.vol .axis { border: 2px solid #a01414; }
.canvas { position: absolute; inset: 0; width: 100%; height: 100%; }
.canvas path, .canvas polyline { vector-effect: non-scaling-stroke; shape-rendering: crispEdges; }
.grid { stroke: #922020; stroke-dasharray: 1 2; }
.zero { stroke: #ccc; stroke-dasharray: 1 1; }
.tick { stroke: #b02020; }
.red { stroke: #cc4646; fill: none; }
.cyan { stroke: #74dcdc; fill: none; }
.white { stroke: #fff; fill: none; }
.yellow { stroke: #f4f45c; fill: none; }
.magenta { stroke: #d030d8; fill: none; }
.green { stroke: #2cd82c; fill: none; }
.lime { stroke: #30c050; fill: none; }
.aqua { stroke: #38c8f0; fill: none; }
.black { stroke: #000; stroke-width: 1; }
.gray { stroke: #ccc; fill: none; }
.mark { stroke: #a01010; fill: none; }
.legend { position: relative; display: flex; gap: 8px; padding-top: 1px; line-height: 16px; white-space: nowrap; }
.price .legend { padding-left: 1px; gap: 6px; }
.vol .legend { gap: 9px; }
.legend .leg:first-child { margin-right: -4px; }
.wave .legend .leg:nth-child(2) { margin-left: 6px; margin-right: 20px; }
.leg svg { width: 7px; height: 14px; margin-left: 2px; vertical-align: middle; fill: none; stroke: #ff4444; }
.leg .d { transform: rotate(180deg); stroke: #6ff; }
.tag { position: absolute; line-height: 12px; }
.hi { right: 34px; top: 12%; }
.lo { left: 139px; bottom: 9px; }
.scale { position: absolute; right: 1px; transform: translateY(-50%); line-height: 14px; }
.cursor { position: absolute; left: 0; right: 0; bottom: 5px; line-height: 15px; background: #000090; color: #f0e8d0; border: 1px solid #6a1050; border-width: 1px 0; }
.dates { display: grid; grid-template-columns: minmax(0, 1fr) 51px; color: #c23c3c; line-height: 16px; }
.date-line { position: relative; }
.year { position: absolute; left: 2px; }
.pick { position: absolute; left: 55px; width: 78px; background: #000080; color: #d0d0e0; border: 1px solid #500838; border-width: 0 1px; white-space: nowrap; }
.month { position: absolute; padding-left: 2px; border-left: 1px solid var(--line); }
.period { text-align: center; color: #c4c4c4; border-left: 1px solid var(--line); border-right: 1px solid var(--line); }
.formula { display: grid; grid-template-columns: 29fr 31fr 31fr 27fr 19fr 20fr 20fr 51fr 43fr 44fr 57fr 43fr 40fr 43fr 44fr 43fr 57fr 44fr 61fr 45fr 56fr 55fr 42fr 16fr 17fr 18fr; border-top: 1px solid var(--line); line-height: 15px; }
.formula button { min-width: 0; border-right: 1px solid var(--line); }
.formula :deep(.lat) { font-size: 11px; }
.formula .sel { background: #4a4a4a; }
.formula .on { color: #36dcdc; }

/* sector table */
.board { display: grid; grid-template-columns: minmax(0, 1fr) 14px; border-top: 1px solid var(--line); border-right: 1px solid var(--line); }
table { width: calc(100% - 9px); table-layout: fixed; border-collapse: collapse; align-self: start; font: bold 14px/20px Roboto, "Noto Sans CJK SC", sans-serif; }
th, td { padding: 0; height: 22px; text-align: right; white-space: nowrap; vertical-align: middle; }
th { font-weight: 400; }
th :deep(.lat) { line-height: 14px; }
th svg { width: 5px; height: 12px; fill: #e01818; stroke: #e01818; }
th:nth-child(2), td:nth-child(2) { text-align: left; padding-left: 10px; }
.c0 { width: 27px; } .c1 { width: 143px; } .c2 { width: 67px; } .c3 { width: 68px; } .c4 { width: 52px; }
.c5 { width: 57px; } .c6 { width: 83px; } .c7 { width: 61px; } .c8 { width: 59px; } .c9 { width: 61px; }
.c10 { width: 71px; } .c11 { width: 60px; } .c12 { width: 60px; } .c13 { width: 64px; } .c14 { width: 57px; }
.name { font-size: 16px; font-weight: 400; color: #e8e8a0; }
.name small { font-size: 12px; line-height: 12px; color: #c4c4c4; }
td i { font-style: normal; font-weight: 400; font-size: 15px; line-height: 15px; }
.vbar { display: flex; flex-direction: column; background: #282828; }
.vbar button { height: 15px; border: 1px solid #777; line-height: 10px; }
.vbar svg { width: 9px; height: 6px; fill: none; stroke: #ccc; stroke-width: 2; }
.thumb { height: 38px; margin-bottom: auto; border: 1px solid #777; background: repeating-linear-gradient(#bbb 0 1px, transparent 1px 2px) center / 6px 7px no-repeat, linear-gradient(90deg, #444, #111); }
.sectors { display: flex; padding-left: 3px; border-right: 1px solid var(--line); font-size: 13px; font-weight: 700; line-height: 16px; color: #000; }
.sectors button { height: 16px; padding: 0 7px; background: #9c9c9c; clip-path: polygon(0 0, 100% 0, calc(100% - 7px) 100%, 7px 100%); }
.sectors .on { padding: 0 8px 0 10px; background: #8a0c10; color: #90f0f0; }
.foot { display: grid; grid-template-columns: 45fr 56fr 56fr 56fr 56fr 55fr 69fr 59fr 64fr 45fr 44fr 56fr 56fr 56fr 56fr 56fr 78fr 51fr; border: solid var(--line); border-width: 1px 0; line-height: 16px; }
.foot button { min-width: 0; border-right: 1px solid var(--line); }

/* news */
.news { display: grid; grid-template-rows: minmax(0, 1fr) 18px; min-height: 0; }
.news-body { display: grid; grid-template-columns: minmax(0, 1fr) 17px; min-height: 0; }
.news ul { list-style: none; margin: 0; padding: 0 11px 0 6px; overflow: hidden; font-size: 14px; line-height: 22px; color: #e29a34; }
.news li { display: flex; justify-content: space-between; height: 22px; white-space: nowrap; }
.news time { font-family: "Liberation Mono", monospace; font-size: 12px; }
.news-bar { display: flex; flex-direction: column; background: #101010; }
.news-bar button { height: 17px; width: 16px; border: 1px solid #333; line-height: 12px; background: #080808; }
.news-bar svg { width: 8px; height: 4px; fill: #bbb; vertical-align: middle; }
.news-thumb { flex: 0 1 556px; width: 16px; margin-bottom: auto; border: 1px solid #3a3a3a; background: #141414; }
.tabs { display: grid; border: solid var(--line); border-width: 1px 0; line-height: 16px; }
.tabs button { min-width: 0; border-right: 1px solid var(--line); }
.tabs .on { color: #36dcdc; }
.news-tabs { grid-template-columns: 34fr 35fr 35fr 35fr 39fr; }
.quote-tabs { grid-template-columns: 27fr repeat(7, 28fr); }

/* quote */
.quote { display: flex; flex-direction: column; min-height: 0; border-left: 1px solid var(--line); }
.q-head { height: 28px; }
.q-block { border-top: 1px solid var(--line); padding: 0 2px; height: 97px; }
.q-block.one { height: 20px; }
.q-block.last { height: 60px; }
.q-row { display: grid; grid-template-columns: 48px 59px 46px 1fr; align-items: center; height: 19px; font-size: 16px; line-height: 19px; white-space: nowrap; }
.q-row span:nth-child(3) { padding-left: 5px; }
.q-row b { text-align: right; font-family: Roboto, "Noto Sans CJK SC", sans-serif; font-size: 14px; }
.q-row i { font-style: normal; font-weight: 400; font-size: 15px; line-height: 15px; }
.q-row :deep(.lat) { font-family: Roboto, sans-serif; font-size: 14px; }
.watch { display: grid; grid-template-columns: 19px 19px 38px 1fr; border: solid var(--line); border-width: 1px 0; height: 20px; line-height: 18px; background: #0c0c0c; }
.watch button { border-right: 1px solid var(--line); text-align: center; }
.watch button:last-child { border: 0; text-align: left; padding-left: 1px; }
.q-space { flex: 1; }
.flow { display: grid; grid-template-columns: 19px 1fr; height: 57px; border-top: 1px solid var(--line); }
.flow-side { display: flex; flex-direction: column; justify-content: space-between; align-items: center; border-right: 1px solid var(--line); line-height: 19px; }
.flow-row { display: grid; grid-template-columns: 21px 15px 59px 1fr; align-items: center; height: 19px; padding-left: 3px; line-height: 16px; }
.flow-row span:nth-child(3) { padding-left: 2px; }
.flow-row i { width: 15px; height: 11px; }
.flow-row span:last-child { margin-left: -2px; }
.r1 { background: #ff5252; } .r2 { background: #842828; } .r3 { background: #4c1818; }
.g1 { background: #4cc44c; } .g2 { background: #267e26; } .g3 { background: #184c18; }

/* tool strip */
.strip { position: relative; display: flex; flex-direction: column; padding-top: 26px; background: #efeff3; color: #1c3c80; border-right: 2px solid #a8b8d0; }
.strip button { flex: none; height: 23px; line-height: 21px; text-align: center; }
.strip svg { width: 18px; height: 18px; vertical-align: middle; }
.strip hr { width: 20px; height: 1px; margin: 3px auto 4px; border: 0; background: #999; flex: none; }
.strip .day { background: #fff; border: 1px solid #999; }
.rsi { font-weight: 700; font-size: 10px; color: #3030c0; }
.key { display: inline-block; width: 18px; border: 1px solid #4a7ab8; background: #fff; font-size: 9px; line-height: 13px; vertical-align: middle; }
.knob { position: absolute; right: -2px; top: 476px; width: 10px; height: 60px; padding: 23px 4px 5px; border-radius: 5px 0 0 5px; background: #4c4c4c; }
.knob i { display: block; height: 100%; background: linear-gradient(#f0a020, #a0d020, #20d820); }

/* status */
.status { display: flex; align-items: center; padding: 0 4px 0 2px; background: linear-gradient(#2c2c2c, #0c0c0c 60%, #000); line-height: 18px; white-space: nowrap; color: #e0e0e0; }
.st-ico { width: 14px; height: 14px; margin-right: 2px; }
.idx { display: grid; grid-template-columns: 25px 53px 45px 47px 45px; }
.idx b:nth-child(n + 3) { padding-left: 1px; }
.idx.up b { color: #f02828; }
.idx.up b:nth-child(3) { padding-left: 9px; }
.idx.dn b { color: #1ec04e; }
.gauge { width: 102px; height: 14px; margin: 0 8px 0 2px; }
.link-msg { margin-right: auto; }
.st-right { width: 80px; height: 16px; }

/* taskbar */
.taskbar { display: flex; align-items: center; background: linear-gradient(90deg, #3a80a8, #2e74a4 40%, #1a5494 60%, #164a86); border-top: 1px solid #8cb0c8; color: #fff; font-family: "Noto Sans", "Noto Sans CJK SC", sans-serif; }
.orb { width: 38px; height: 38px; margin-left: 8px; }
.orb svg { width: 38px; height: 38px; display: block; }
.grip { width: 9px; height: 30px; margin-left: 12px; background: radial-gradient(#0c3050 35%, transparent 40%) 0 0 / 3px 3px; }
.task { display: flex; align-items: center; gap: 8px; width: 159px; height: 38px; padding: 0 8px; overflow: hidden; border: 1px solid #9cc4dc; border-radius: 3px; background: linear-gradient(160deg, #9cc0d4, #4a88b0 45%, #3a7cac); }
.task svg { width: 32px; height: 32px; flex: none; }
.ie { margin-left: 9px; gap: 4px; }
.pin { width: 35px; margin-left: 15px; }
.pin svg { width: 34px; height: 32px; display: block; }
.pin.small { width: 28px; margin-left: 29px; }
.pin.small svg { width: 28px; height: 28px; }
.app { margin-left: 19px; padding-left: 7px; gap: 5px; }
.hao { margin-left: 3px; gap: 5px; }
.hao-ico { display: flex; flex: none; flex-direction: column; align-items: center; width: 31px; height: 32px; border-radius: 5px; background: #fff; font-weight: 700; line-height: 15px; }
.hao-ico b { font-size: 13px; color: #1a9a2a; }
.hao-ico i { font-size: 11px; font-style: normal; color: #f05818; }
.beam { flex: 1; align-self: stretch; background: linear-gradient(50deg, transparent 79%, rgba(150, 190, 220, 0.7) 81%, transparent 83%); background-size: 480px 100%; background-repeat: no-repeat; }
.tray { display: flex; align-items: center; }
.ch { margin: 0 8px 4px 10px; font-family: "Liberation Serif", serif; }
.w16 { width: 16px; height: 16px; margin-right: 8px; }
.usb { width: 14px; height: 16px; margin: 0 12px 0 6px; }
.caret { width: 8px; height: 4px; margin-right: 12px; }
.clock { display: flex; flex-direction: column; align-items: center; margin-left: 4px; line-height: 18px; white-space: nowrap; }
.desk { align-self: stretch; width: 13px; height: 37px; margin: 0 1px 0 5px; border: 1px solid #7ca4c8; background: linear-gradient(#5a88b4, #1c4878); }

.mark-center { position: absolute; left: 528px; top: 434px; font: bold 26px/34px "Noto Sans", "Noto Sans CJK SC", sans-serif; color: #e80000; white-space: nowrap; }
</style>
